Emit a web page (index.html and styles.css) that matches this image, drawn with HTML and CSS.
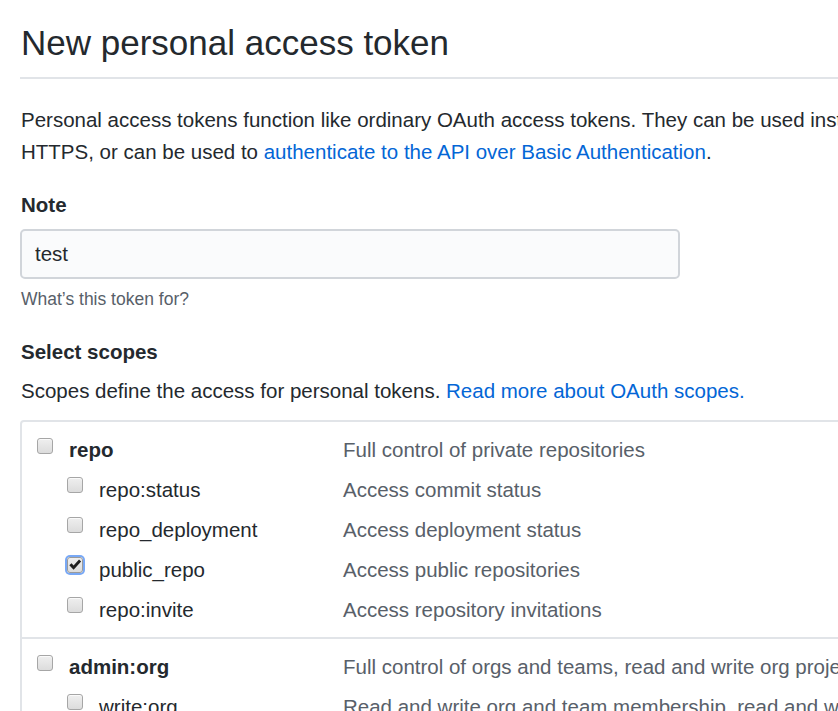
FILE: index.html
```html
<!DOCTYPE html>
<html lang="en">
<head>
<meta charset="utf-8">
<title>New personal access token</title>
<link rel="stylesheet" href="styles.css">
</head>
<body>
<div class="page">
  <h2 class="subhead">New personal access token</h2>
  <p class="intro">Personal access tokens function like ordinary OAuth access tokens. They can be used instead of a password for Git over<br>HTTPS, or can be used to <a href="#">authenticate to the API over Basic Authentication</a>.</p>

  <div class="form-group">
    <label class="label" for="note">Note</label>
    <input class="input" id="note" type="text" value="test">
    <p class="hint">What’s this token for?</p>
  </div>

  <div class="form-group">
    <div class="label">Select scopes</div>
    <p class="scopes-intro">Scopes define the access for personal tokens. <a href="#">Read more about OAuth scopes.</a></p>
  </div>

  <div class="scopes">
    <div class="group">
      <div class="row parent">
        <div class="name"><span class="cb"></span><span class="scope">repo</span></div>
        <div class="desc">Full control of private repositories</div>
      </div>
      <div class="row child">
        <div class="name"><span class="cb"></span><span class="scope">repo:status</span></div>
        <div class="desc">Access commit status</div>
      </div>
      <div class="row child">
        <div class="name"><span class="cb"></span><span class="scope">repo_deployment</span></div>
        <div class="desc">Access deployment status</div>
      </div>
      <div class="row child">
        <div class="name"><span class="cb checked"><svg viewBox="0 0 16 16" width="14" height="14"><path d="M1.5 8.3 L4 6 L6.4 8.6 L12.6 1.8 L15 4 L6.4 13.4 Z" fill="#1f1f1f"/></svg></span><span class="scope">public_repo</span></div>
        <div class="desc">Access public repositories</div>
      </div>
      <div class="row child">
        <div class="name"><span class="cb"></span><span class="scope">repo:invite</span></div>
        <div class="desc">Access repository invitations</div>
      </div>
    </div>
    <div class="group">
      <div class="row parent">
        <div class="name"><span class="cb"></span><span class="scope">admin:org</span></div>
        <div class="desc">Full control of orgs and teams, read and write org projects</div>
      </div>
      <div class="row child">
        <div class="name"><span class="cb"></span><span class="scope">write:org</span></div>
        <div class="desc">Read and write org and team membership, read and write org projects</div>
      </div>
    </div>
  </div>
</div>
</body>
</html>
```

FILE: styles.css
```css
html, body {
  margin: 0;
  padding: 0;
  background: #fff;
  overflow: hidden;
}

body {
  font-family: "Liberation Sans", Arial, sans-serif;
  font-size: 20.5px;
  line-height: 31.5px;
  color: #24292e;
}

.page {
  width: 1100px;
  padding: 0 0 0 20px;
}

a {
  color: #0366d6;
  text-decoration: none;
}

.subhead {
  margin: 0 0 25px 0;
  padding: 16px 0 7px 1px;
  font-size: 35px;
  font-weight: normal;
  line-height: 54px;
  border-bottom: 2px solid #e1e4e8;
  color: #24292e;
}

.intro {
  margin: 0 0 22px 0;
  padding-left: 1px;
  white-space: nowrap;
}

.label {
  display: block;
  font-weight: bold;
  padding-left: 1px;
  margin-bottom: 8px;
}

.input {
  display: block;
  box-sizing: border-box;
  width: 660px;
  height: 50px;
  margin: 0;
  padding: 0 13px;
  font-family: inherit;
  font-size: 20.5px;
  color: #24292e;
  background: #fafbfc;
  border: 2px solid #d1d5da;
  border-radius: 5px;
  outline: none;
}

.hint {
  margin: 7px 0 23px 1px;
  font-size: 17.5px;
  line-height: 27px;
  color: #586069;
}

.scopes-intro {
  margin: 0 0 13px 1px;
  white-space: nowrap;
}

.scopes {
  border: 2px solid #e1e4e8;
  border-radius: 4px;
}

.group {
  padding: 8px 0 7px 0;
}

.group + .group {
  border-top: 2px solid #e1e4e8;
}

.row {
  display: flex;
  height: 40px;
  line-height: 40px;
}

.name {
  display: flex;
  align-items: flex-start;
  flex: none;
}

.parent .name {
  padding-left: 15px;
  width: 306px;
}

.child .name {
  padding-left: 45px;
  width: 276px;
}

.parent .scope {
  font-weight: bold;
}

.cb {
  flex: none;
  box-sizing: border-box;
  width: 16px;
  height: 16px;
  margin: 8px 16px 0 0;
  border: 1px solid #a6a6a6;
  border-radius: 3px;
  background: linear-gradient(#efefef, #dcdcdc);
  box-shadow: inset 0 1px 0 #fafafa;
  display: flex;
  align-items: center;
  justify-content: center;
}

.child .cb {
  margin-top: 7px;
}

.cb.checked {
  border: 1px solid #9a9a9a;
  box-shadow: 0 0 0 2px #78a8f5;
}

.desc {
  color: #586069;
  white-space: nowrap;
}
```
